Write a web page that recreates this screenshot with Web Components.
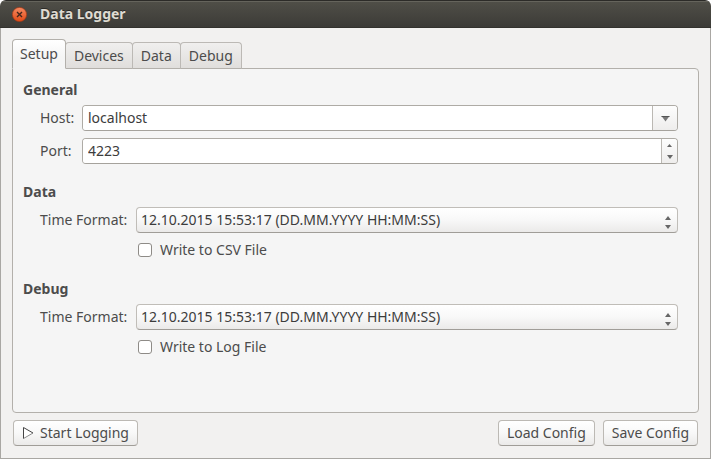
<!DOCTYPE html>
<html lang="en">
<head>
<meta charset="utf-8">
<title>Data Logger</title>
<style>
html, body { margin: 0; background: #fff; }
body { font: 14px/20px "Noto Sans", "Open Sans", sans-serif; color: #4c4c4c; }
</style>
</head>
<body>
<app-window caption="Data Logger">
  <tab-view>
    <tab-button slot="tabs" selected>Setup</tab-button>
    <tab-button slot="tabs">Devices</tab-button>
    <tab-button slot="tabs">Data</tab-button>
    <tab-button slot="tabs">Debug</tab-button>
    <form-section heading="General" style="--label-width: 42px">
      <combo-field value="localhost">Host:</combo-field>
      <spin-field value="4223">Port:</spin-field>
    </form-section>
    <form-section heading="Data">
      <select-field option="12.10.2015 15:53:17 (DD.MM.YYYY HH:MM:SS)">Time Format:</select-field>
      <check-field>Write to CSV File</check-field>
    </form-section>
    <form-section heading="Debug">
      <select-field option="12.10.2015 15:53:17 (DD.MM.YYYY HH:MM:SS)">Time Format:</select-field>
      <check-field>Write to Log File</check-field>
    </form-section>
  </tab-view>
  <push-button slot="start">
    <svg slot="icon" width="12" height="14" viewBox="0 0 12 14" aria-hidden="true"><path d="M1.5 1.5V12.5L11 7Z" fill="#fff"/><path d="M1.5 12.5L11 7" fill="none" stroke="#8c8c8c"/><path d="M1.5 12.5V1.5L11 7" fill="none" stroke="#444"/></svg>Start Logging</push-button>
  <push-button slot="end">Load Config</push-button>
  <push-button slot="end">Save Config</push-button>
</app-window>
<script>
const define = (name, html, setup) => {
  const template = document.createElement('template');
  template.innerHTML = '<style>*{box-sizing:border-box}button,input,select{font:inherit;color:inherit;margin:0}</style>' + html;
  customElements.define(name, class extends HTMLElement {
    constructor() {
      super();
      this.attachShadow({ mode: 'open' }).append(template.content.cloneNode(true));
    }
    connectedCallback() { if (setup) setup(this, this.shadowRoot); }
  });
};

const fieldStyle = `
  :host { display: flex; align-items: center; }
  label { flex: none; width: var(--label-width, 96px); white-space: nowrap; }
  .box { flex: 1; min-width: 0; display: flex; height: 26px; margin-bottom: -1px; border: 1px solid #aeaba5; border-bottom-color: #a5a29c; border-radius: 4px; background: #fff; overflow: hidden; }
  input { flex: 1; min-width: 0; border: 0; padding: 0 5px; background: #fff; color: #3c3c3c; outline: 0; }
  .box button { border: 0; border-left: 1px solid #bbb8b3; padding: 0; background: linear-gradient(#fdfdfd, #eeedec); display: flex; align-items: center; justify-content: center; }`;

define('app-window', `<style>
  :host { display: flex; flex-direction: column; min-height: 100vh; box-sizing: border-box; background: #f2f1f0; border-radius: 6px 6px 0 0; overflow: hidden; }
  header { display: flex; align-items: center; gap: 13px; height: 28px; padding: 0 12px; background: linear-gradient(#504f48, #3c3b37); border-top: 1px solid #2c2b28; border-bottom: 1px solid #33322e; box-shadow: inset 0 1px #65645c; color: #dfdbd2; }
  h1 { margin: 0; font-size: 14px; line-height: 20px; font-weight: 700; text-shadow: 0 -1px #2b2a27; }
  .close { width: 15px; height: 15px; padding: 0; border: 0; border-radius: 50%; background: none; display: flex; }
  main { flex: 1; display: flex; flex-direction: column; padding: 11px 11px 12px; border: 1px solid #a9a7a3; border-top: 0; }
  footer { display: flex; justify-content: space-between; padding: 7px 1px 0; }
  .group { display: flex; gap: 8px; }
</style>
<header><button class="close" aria-label="Close"><svg width="15" height="15" viewBox="0 0 15 15"><defs><linearGradient id="g" x2="0" y2="1"><stop stop-color="#f58a62"/><stop offset="1" stop-color="#e14a16"/></linearGradient></defs><circle cx="7.5" cy="7.5" r="7.1" fill="url(#g)" stroke="#a93a14" stroke-width=".7"/><path d="M5 5l5 5M10 5l-5 5" stroke="#43271d" stroke-width="1.4"/></svg></button><h1></h1></header>
<main><slot></slot><footer><div class="group"><slot name="start"></slot></div><div class="group"><slot name="end"></slot></div></footer></main>`,
(el, root) => { root.querySelector('h1').textContent = el.getAttribute('caption'); });

define('tab-view', `<style>
  :host { flex: 1; display: flex; flex-direction: column; }
  nav { display: flex; align-items: flex-end; margin-bottom: -1px; position: relative; }
  section { flex: 1; display: flex; flex-direction: column; gap: 19px; padding: 11px 20px 11px 10px; border: 1px solid #b3b0ab; border-radius: 0 4px 4px 4px; background: #f5f5f5; }
</style><nav role="tablist"><slot name="tabs"></slot></nav><section><slot></slot></section>`);

define('tab-button', `<style>
  :host { display: block; margin-left: -1px; }
  :host([selected]) { margin-left: 0; position: relative; z-index: 1; }
  button { display: block; height: 27px; padding: 0 8px; border: 1px solid #bcb9b5; border-bottom-color: #b3b0ab; border-radius: 4px 4px 0 0; background: linear-gradient(#f0efee, #e0dedc); line-height: 24px; }
  :host([selected]) button { height: 30px; padding: 0 7px; background: linear-gradient(#fff, #f5f5f5 60%); border-color: #b3b0ab; border-bottom-color: #f5f5f5; line-height: 26px; }
</style><button role="tab"><slot></slot></button>`,
(el, root) => root.querySelector('button').setAttribute('aria-selected', el.hasAttribute('selected')));

define('form-section', `<style>
  :host { display: block; }
  h2 { margin: 0 0 5px; font-size: 14px; line-height: 20px; font-weight: 700; }
  .rows { display: flex; flex-direction: column; gap: 8px; padding-left: 17px; }
</style><h2></h2><div class="rows"><slot></slot></div>`,
(el, root) => { root.querySelector('h2').textContent = el.getAttribute('heading'); });

define('combo-field', `<style>${fieldStyle} .box button { width: 25px; }</style>
<label for="f"><slot></slot></label><div class="box"><input id="f"><button aria-label="Show hosts"><svg width="9" height="7" viewBox="0 0 9 7"><path d="M.5 1h8L4.5 6.500Z" fill="#777"/><path d="M.5 1.500h8" stroke="#555"/></svg></button></div>`,
(el, root) => { root.querySelector('input').value = el.getAttribute('value'); });

define('spin-field', `<style>${fieldStyle}
  .steps { width: 16px; display: flex; flex-direction: column; border-left: 1px solid #bbb8b3; background: linear-gradient(#fdfdfd, #eeedec); }
  .box .steps button { flex: 1; border: 0; background: none; }
</style>
<label for="f"><slot></slot></label><div class="box"><input id="f" inputmode="numeric"><div class="steps"><button aria-label="Increase"><svg width="5" height="3" viewBox="0 0 5 3"><path d="M0 3L2.500 0L5 3Z" fill="#666"/></svg></button><button aria-label="Decrease"><svg width="6" height="4" viewBox="0 0 6 4"><path d="M0 0h6L3 4Z" fill="#666"/></svg></button></div></div>`,
(el, root) => { root.querySelector('input').value = el.getAttribute('value'); });

define('select-field', `<style>${fieldStyle}
  .box { background: linear-gradient(#fff, #f8f8f8 50%, #ebeae9); align-items: center; padding-right: 6px; display: grid; grid-template-columns: 1fr 6px; border-color: #c0bdb8; border-bottom-color: #a09d98; }
  select { grid-area: 1 / 1 / 2 / 3; appearance: none; width: 100%; height: 24px; border: 0; padding: 0 12px 0 4px; background: none; color: #3c3c3c; outline: 0; }
  svg { grid-area: 1 / 2; margin-top: 4px; pointer-events: none; }
</style>
<label for="f"><slot></slot></label><div class="box"><select id="f"></select><svg width="6" height="13" viewBox="0 0 6 13"><path d="M0 4L3 0L6 4ZM0 9h6L3 13Z" fill="#666"/></svg></div>`,
(el, root) => root.querySelector('select').add(new Option(el.getAttribute('option'))));

define('check-field', `<style>
  :host { display: flex; padding-left: 98px; }
  label { display: flex; align-items: center; gap: 8px; height: 20px; }
  input { appearance: none; width: 14px; height: 14px; border: 1px solid #8e8b87; border-radius: 3px; background: #fff; }
  input:checked { background: #f07746; }
</style><label><input type="checkbox"><span><slot></slot></span></label>`);

define('push-button', `<style>
  :host { display: block; }
  button { display: flex; align-items: center; gap: 6px; height: 26px; padding: 0 8px; border: 1px solid #bcb9b4; border-bottom-color: #a09d98; border-radius: 4px; background: linear-gradient(#fff, #f8f8f8 50%, #ebeae9); white-space: nowrap; }
</style><button><slot name="icon"></slot><span><slot></slot></span></button>`);
</script>
</body>
</html>
